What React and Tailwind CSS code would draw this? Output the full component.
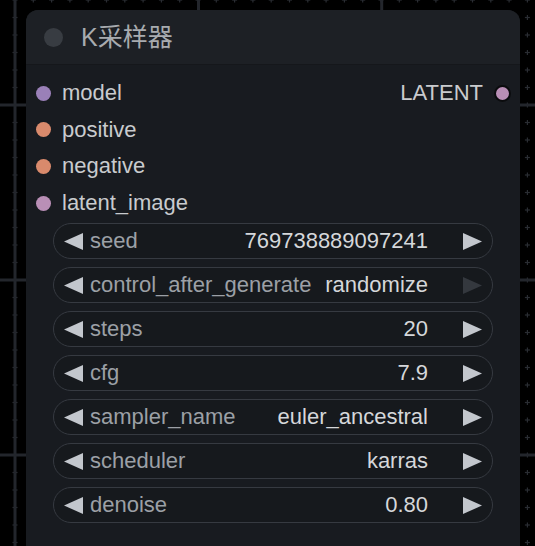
import React from 'react';

const inputs = [
  { name: 'model', color: 'bg-[#9a80b8]' },
  { name: 'positive', color: 'bg-[#d98a6c]' },
  { name: 'negative', color: 'bg-[#d98a6c]' },
  { name: 'latent_image', color: 'bg-[#b98fb6]' },
];

const widgets = [
  { label: 'seed', value: '769738889097241' },
  { label: 'control_after_generate', value: 'randomize', dim: true },
  { label: 'steps', value: '20' },
  { label: 'cfg', value: '7.9' },
  { label: 'sampler_name', value: 'euler_ancestral' },
  { label: 'scheduler', value: 'karras' },
  { label: 'denoise', value: '0.80' },
];

const CanvasGrid = () => {
  const minorX = [];
  for (let x = 15 - 183; x < 560; x += 18.3) minorX.push(x);
  const minorY = [];
  for (let y = 0; y < 560; y += 17.5) minorY.push(y);
  const majorX = [15, 198.5, 381.7];
  const majorY = [105, 280, 455];
  return (
    <svg className="absolute inset-0" width="535" height="546">
      {minorX.map((x) =>
        minorY.map((y) => (
          <g key={`${x}-${y}`} stroke="#2a2d33" strokeWidth="1.2">
            <line x1={x - 2.5} y1={y} x2={x + 2.5} y2={y} />
            <line x1={x} y1={y - 2.5} x2={x} y2={y + 2.5} />
          </g>
        ))
      )}
      {majorX.map((x) => (
        <line key={x} x1={x} y1="0" x2={x} y2="546" stroke="#23262c" strokeWidth="3" />
      ))}
      {majorY.map((y) => (
        <line key={y} x1="0" y1={y} x2="535" y2={y} stroke="#23262c" strokeWidth="3" />
      ))}
    </svg>
  );
};

const Arrow = ({ dir, dim }) => (
  <svg width="19" height="17" viewBox="0 0 19 17" className="shrink-0">
    <polygon
      points={dir === 'left' ? '0,8.5 19,0 19,17' : '19,8.5 0,0 0,17'}
      fill={dim ? '#34383e' : '#c3c7cd'}
    />
  </svg>
);

const App = () => {
  return (
    <div
      className="relative w-[535px] h-[546px] overflow-hidden bg-black pt-[10px] pl-[26px]"
      style={{ fontFamily: '"Liberation Sans", Arial, "Noto Sans CJK SC", sans-serif' }}
    >
      <CanvasGrid />
      <div className="relative w-[494px] h-[560px] rounded-t-[12px] bg-[#181b20] overflow-hidden">
        <div className="h-[55px] flex items-center bg-[#1d2025] border-b border-[#15171b] pl-[18px]">
          <div className="w-[19px] h-[19px] rounded-full bg-[#383c42]" />
          <span className="ml-[18px] text-[25px] text-[#a8abaf] leading-none">K采样器</span>
        </div>

        <div className="pt-[10px]">
          {inputs.map((inp, i) => (
            <div key={inp.name} className="h-[36.6px] flex items-center pl-[10px] pr-[9px]">
              <div className={`w-[15px] h-[15px] rounded-full ${inp.color}`} />
              <span className="ml-[11px] text-[22px] text-[#c9cbce] leading-none">{inp.name}</span>
              {i === 0 && (
                <div className="ml-auto flex items-center">
                  <span className="text-[22px] text-[#c9cbce] leading-none">LATENT</span>
                  <div className="ml-[11px] w-[17px] h-[17px] rounded-full bg-[#b98fb6] border-[2px] border-[#0b0c0e]" />
                </div>
              )}
            </div>
          ))}
        </div>

        <div className="mt-[1.6px] px-[27px] flex flex-col gap-[7.6px]">
          {widgets.map((w) => (
            <div
              key={w.label}
              className="h-[36.4px] flex items-center rounded-full border-[1.5px] border-[#363a41] bg-[#16191d] pl-[10px] pr-[10px]"
            >
              <Arrow dir="left" />
              <span className="ml-[7px] text-[22px] text-[#9ca0a6] leading-none whitespace-nowrap">{w.label}</span>
              <span className="ml-auto text-[22px] text-[#d5d7da] leading-none whitespace-nowrap">{w.value}</span>
              <div className="ml-[35px]">
                <Arrow dir="right" dim={w.dim} />
              </div>
            </div>
          ))}
        </div>
      </div>
    </div>
  );
};

export default App;
